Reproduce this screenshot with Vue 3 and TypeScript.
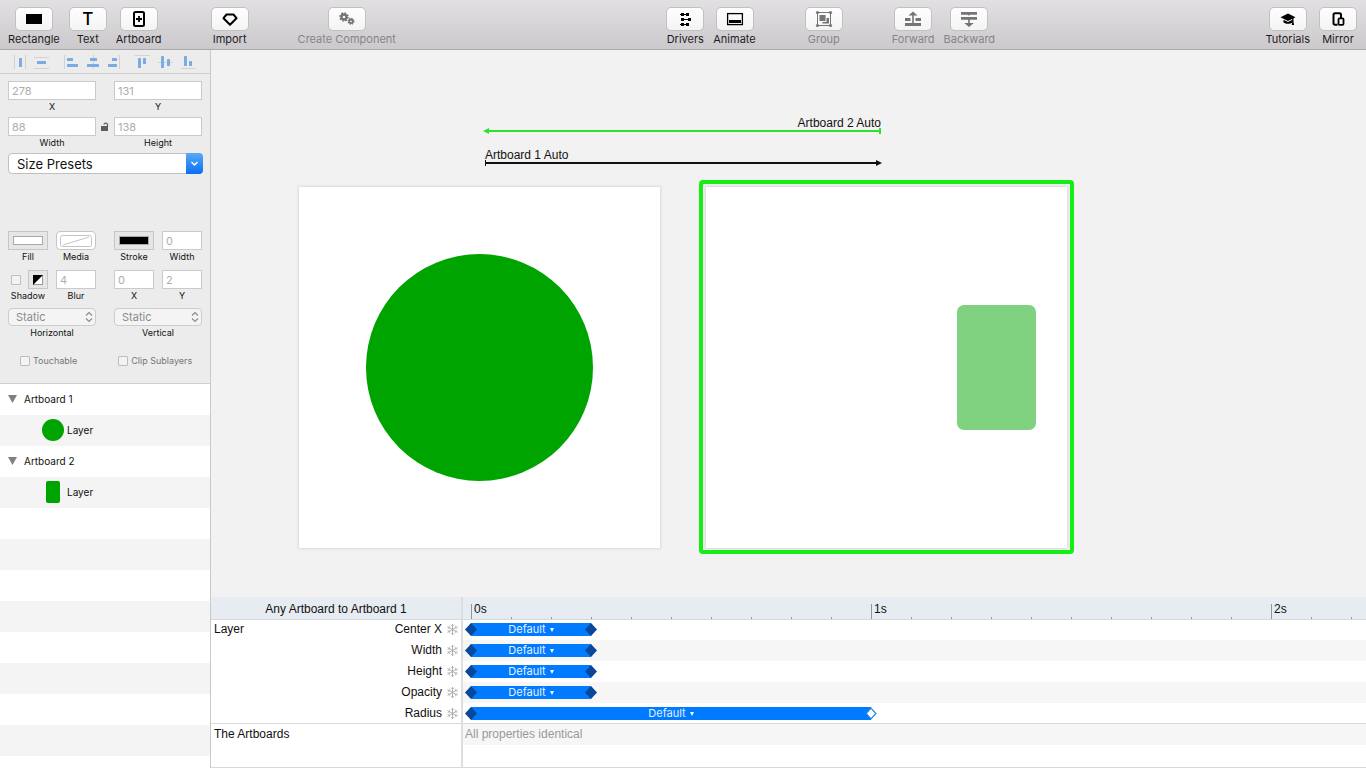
<script setup lang="ts">
import { ref } from 'vue'

interface Tool {
  id: string
  label: string
  disabled?: boolean
}

const toolGroups: { id: string; push?: boolean; tools: Tool[] }[] = [
  {
    id: 'insert',
    tools: [
      { id: 'rectangle', label: 'Rectangle' },
      { id: 'text', label: 'Text' },
      { id: 'artboard', label: 'Artboard' },
    ],
  },
  { id: 'import', tools: [{ id: 'import', label: 'Import' }] },
  { id: 'component', tools: [{ id: 'component', label: 'Create Component', disabled: true }] },
  {
    id: 'motion',
    push: true,
    tools: [
      { id: 'drivers', label: 'Drivers' },
      { id: 'animate', label: 'Animate' },
    ],
  },
  { id: 'group', tools: [{ id: 'group', label: 'Group', disabled: true }] },
  {
    id: 'order',
    tools: [
      { id: 'forward', label: 'Forward', disabled: true },
      { id: 'backward', label: 'Backward', disabled: true },
    ],
  },
  {
    id: 'help',
    push: true,
    tools: [
      { id: 'tutorials', label: 'Tutorials' },
      { id: 'mirror', label: 'Mirror' },
    ],
  },
]

/* Each glyph: a thin guide path and the blue bars as [x, y, width, height]. */
interface AlignGlyph {
  name: string
  guide: string
  bars: number[][]
}

const alignGroups: { id: string; items: AlignGlyph[] }[] = [
  {
    id: 'distribute',
    items: [
      { name: 'Distribute horizontally', guide: 'M2.5 2v14M13.5 2v14', bars: [[7, 5, 3, 9]] },
      { name: 'Distribute vertically', guide: 'M1 4.5h15M1 15.5h15', bars: [[4, 8, 9, 3]] },
    ],
  },
  {
    id: 'horizontal',
    items: [
      { name: 'Align left', guide: 'M.5 2v14', bars: [[3, 5, 6, 3], [3, 11, 11, 3]] },
      { name: 'Align center', guide: 'M8.5 2v14', bars: [[5, 5, 7, 3], [2, 11, 12, 3]] },
      { name: 'Align right', guide: 'M13.5 2v14', bars: [[6, 5, 5, 3], [2, 11, 9, 3]] },
    ],
  },
  {
    id: 'vertical',
    items: [
      { name: 'Align top', guide: 'M1 2.5h15', bars: [[4, 5, 3, 10], [9, 5, 3, 6]] },
      { name: 'Align middle', guide: 'M1 9.5h15', bars: [[4, 3, 3, 12], [10, 6, 3, 7]] },
      { name: 'Align bottom', guide: 'M1 15.5h15', bars: [[4, 3, 3, 10], [9, 8, 3, 5]] },
    ],
  },
]

const layers = [
  { name: 'Artboard 1', child: 'Layer', shape: 'round' },
  { name: 'Artboard 2', child: 'Layer', shape: 'tall' },
]

const pxPerSecond = 400
const ticks = Array.from({ length: 30 }, (_, i) => i)

const tracks = [
  { name: 'Center X', seconds: 0.3, open: false },
  { name: 'Width', seconds: 0.3, open: false },
  { name: 'Height', seconds: 0.3, open: false },
  { name: 'Opacity', seconds: 0.3, open: false },
  { name: 'Radius', seconds: 1, open: true },
]

const x = ref('278')
const y = ref('131')
const width = ref('88')
const height = ref('138')
const strokeWidth = ref('0')
const blur = ref('4')
const shadowX = ref('0')
const shadowY = ref('2')
const shadow = ref(false)
const touchable = ref(false)
const clip = ref(false)
</script>

<template>
  <div class="app">
    <header class="toolbar">
      <div v-for="g in toolGroups" :key="g.id" class="tool-group" :class="{ push: g.push }">
        <button v-for="t in g.tools" :key="t.id" type="button" class="tool" :disabled="t.disabled">
          <span class="tool-face">
            <span v-if="t.id === 'text'" class="tee" aria-hidden="true">T</span>
            <svg v-else width="24" height="20" viewBox="0 0 24 20" aria-hidden="true">
              <rect v-if="t.id === 'rectangle'" x="4" y="5" width="16" height="10" fill="currentColor" />
              <g v-else-if="t.id === 'artboard'" fill="none" stroke="currentColor" stroke-width="2">
                <rect x="7" y="3" width="10" height="14" rx="1.5" />
                <path d="M12 7v6M9 10h6" stroke-width="1.8" />
              </g>
              <path
                v-else-if="t.id === 'import'"
                d="M8.5 5.500h7l3 3.700L12 15.700 5.500 9.200z"
                fill="none"
                stroke="currentColor"
                stroke-width="2"
                stroke-linejoin="round"
              />
              <g v-else-if="t.id === 'component'" fill="none" stroke="currentColor">
                <circle cx="9" cy="8" r="2.5" stroke-width="2.4" />
                <circle cx="9" cy="8" r="4" stroke-width="1.6" stroke-dasharray="1.57 1.57" />
                <circle cx="16" cy="12.3" r="1.8" stroke-width="1.8" />
                <circle cx="16" cy="12.3" r="2.9" stroke-width="1.3" stroke-dasharray="1.14 1.14" />
              </g>
              <g v-else-if="t.id === 'drivers'" fill="currentColor">
                <rect x="8" y="4" width="3" height="3" />
                <rect x="13" y="4" width="3" height="3" />
                <rect x="8" y="9" width="3" height="3" />
                <rect x="15" y="9" width="3" height="3" />
                <rect x="8" y="14" width="3" height="3" />
                <rect x="13" y="14" width="3" height="3" />
                <path d="M7 5.100h7v1H7zM9 10.100h7v1H9zM7 15.100h7v1H7z" />
              </g>
              <g v-else-if="t.id === 'animate'">
                <rect x="4.600" y="4.600" width="14.800" height="11" fill="none" stroke="currentColor" stroke-width="1.300" />
                <rect x="6" y="11" width="12" height="3" fill="currentColor" />
              </g>
              <g v-else-if="t.id === 'group'" fill="currentColor">
                <rect x="5.5" y="3.5" width="13" height="13" fill="none" stroke="currentColor" />
                <circle cx="5.5" cy="3.5" r="1.6" />
                <circle cx="18.5" cy="3.5" r="1.6" />
                <circle cx="5.5" cy="16.5" r="1.6" />
                <circle cx="18.5" cy="16.5" r="1.6" />
                <rect x="7.5" y="6" width="6" height="6" />
                <path d="M14.5 9H17v5.5h-6.5V13h4z" />
              </g>
              <g v-else-if="t.id === 'forward'" fill="currentColor">
                <path d="M12 2.5l4.6 4h-3.8V14h7.2v3H4v-3h7.2V6.500H7.400z" />
                <path d="M4 9h5.500v3H4zM14.500 9H20v3h-5.500z" />
              </g>
              <g v-else-if="t.id === 'backward'" fill="currentColor">
                <path d="M4 3h16v2.700h-7l-1 1-1-1H4zM4 8h16v2.700h-7.200V14h4L12 18l-4.800-4h4v-3.300H4z" />
              </g>
              <g v-else-if="t.id === 'tutorials'" fill="currentColor">
                <path d="M12 4.500l7.500 3.700L12 12 4.500 8.200z" />
                <path d="M7.500 10.800L12 13l4.500-2.200v2.700c-2.500 1.800-6.500 1.800-9 0z" />
                <path d="M16.200 9h1.300v4l.6 3h-2.400l.5-3z" />
              </g>
              <g v-else fill="none" stroke="currentColor" stroke-width="2">
                <path d="M11.500 15.800H9A1.500 1.500 0 0 1 7.500 14.300V5.700A1.500 1.500 0 0 1 9 4.200h4.500A1.500 1.500 0 0 1 15 5.700V9" />
                <rect x="12.500" y="9.300" width="5" height="6.500" rx="1" stroke-width="1.800" />
              </g>
            </svg>
          </span>
          <span class="tool-label">{{ t.label }}</span>
        </button>
      </div>
    </header>

    <div class="body">
      <aside class="sidebar">
        <div class="align-bar">
          <div v-for="g in alignGroups" :key="g.id" class="align-group" :class="g.id">
            <button v-for="a in g.items" :key="a.name" type="button" :aria-label="a.name">
              <svg width="17" height="17" viewBox="0 0 17 17" aria-hidden="true">
                <path :d="a.guide" stroke="#d2d2d2" fill="none" />
                <rect
                  v-for="(b, i) in a.bars"
                  :key="i"
                  :x="b[0]"
                  :y="b[1]"
                  :width="b[2]"
                  :height="b[3]"
                  rx=".6"
                  fill="#7aabe3"
                />
              </svg>
            </button>
          </div>
        </div>

        <form class="inspector" @submit.prevent>
          <div class="pair">
            <label class="field"><input v-model="x" type="text" /><span>X</span></label>
            <label class="field"><input v-model="y" type="text" /><span>Y</span></label>
          </div>
          <div class="pair size">
            <label class="field"><input v-model="width" type="text" /><span>Width</span></label>
            <button type="button" class="lock" aria-label="Lock proportions">
              <svg width="8" height="9" viewBox="0 0 8 9" aria-hidden="true">
                <rect x="0" y="4" width="7" height="5" fill="#5c5c5c" />
                <path d="M2.800 2.500a1.900 1.900 0 0 1 3.700 0V5" fill="none" stroke="#5c5c5c" stroke-width="1.200" />
              </svg>
            </button>
            <label class="field"><input v-model="height" type="text" /><span>Height</span></label>
          </div>
          <div class="presets">
            <select aria-label="Size Presets">
              <option>Size Presets</option>
            </select>
            <svg class="presets-arrow" width="17" height="21" viewBox="0 0 17 21" aria-hidden="true">
              <path d="M5.500 9l3 3 3-3" fill="none" stroke="#fff" stroke-width="1.500" />
            </svg>
          </div>

          <div class="pair paint">
            <div class="half">
              <div class="field"><button id="fill" type="button" class="well"><i class="swatch white"></i></button><label for="fill">Fill</label></div>
              <div class="field">
                <button id="media" type="button" class="well media">
                  <svg width="32" height="12" viewBox="0 0 32 12" aria-hidden="true">
                    <rect x=".5" y=".5" width="31" height="11" rx="2" fill="#fff" stroke="#c4c4c4" />
                    <path d="M3 10L29 2" stroke="#c4c4c4" />
                  </svg>
                </button>
                <label for="media">Media</label>
              </div>
            </div>
            <div class="half">
              <div class="field"><button id="stroke" type="button" class="well"><i class="swatch black"></i></button><label for="stroke">Stroke</label></div>
              <label class="field"><input v-model="strokeWidth" type="text" /><span>Width</span></label>
            </div>
          </div>
          <div class="pair shadow">
            <div class="half">
              <div class="field">
                <div class="shadow-controls">
                  <input id="shadow" v-model="shadow" type="checkbox" />
                  <button type="button" class="well small" aria-label="Shadow color">
                    <svg width="10" height="10" viewBox="0 0 10 10" aria-hidden="true">
                      <rect x=".5" y=".5" width="9" height="9" fill="#fff" stroke="#9a9a9a" />
                      <path d="M0 0h10L0 10z" fill="#000" />
                    </svg>
                  </button>
                </div>
                <label for="shadow">Shadow</label>
              </div>
              <label class="field"><input v-model="blur" type="text" /><span>Blur</span></label>
            </div>
            <div class="half">
              <label class="field"><input v-model="shadowX" type="text" /><span>X</span></label>
              <label class="field"><input v-model="shadowY" type="text" /><span>Y</span></label>
            </div>
          </div>
          <div class="pair pins">
            <div v-for="axis in ['Horizontal', 'Vertical']" :key="axis" class="field">
              <div class="popup">
                <select :id="axis">
                  <option>Static</option>
                </select>
                <svg class="popup-arrow" width="8" height="12" viewBox="0 0 8 12" aria-hidden="true">
                  <path d="M1 4.500l3-3 3 3M1 7.500l3 3 3-3" fill="none" stroke="#8c8c8c" stroke-width="1.200" />
                </svg>
              </div>
              <label :for="axis">{{ axis }}</label>
            </div>
          </div>
          <div class="flags">
            <label><input v-model="touchable" type="checkbox" />Touchable</label>
            <label><input v-model="clip" type="checkbox" />Clip Sublayers</label>
          </div>
        </form>

        <ul class="layers">
          <li v-for="l in layers" :key="l.name">
            <div class="layer-row">
              <svg width="10" height="8" viewBox="0 0 10 8" aria-hidden="true"><path d="M0 0h9L4.500 8z" fill="#808080" /></svg>
              <span>{{ l.name }}</span>
            </div>
            <div class="layer-row child">
              <i class="thumb" :class="l.shape"></i>
              <span>{{ l.child }}</span>
            </div>
          </li>
        </ul>
      </aside>

      <main class="main">
        <section class="canvas">
          <div class="transition back">
            <span>Artboard 2 Auto</span>
            <svg width="398" height="7" viewBox="0 0 398 7" aria-hidden="true">
              <path d="M5 3h392M397 0v6" stroke="#2fe02f" stroke-width="2" fill="none" />
              <path d="M0 3L6 0v6z" fill="#2fe02f" />
            </svg>
          </div>
          <div class="transition forth">
            <span>Artboard 1 Auto</span>
            <svg width="397" height="7" viewBox="0 0 397 7" aria-hidden="true">
              <path d="M1 3h392" stroke="#111" stroke-width="2" fill="none" />
              <path d="M.5 0v6" stroke="#111" fill="none" />
              <path d="M397 3L391 0v6z" fill="#111" />
            </svg>
          </div>
          <div class="board first"><div class="circle"></div></div>
          <div class="board second"><div class="block"></div></div>
          <div class="selection"></div>
        </section>

        <section class="timeline">
          <div class="props">
            <h2>Any Artboard to Artboard 1</h2>
            <div class="prop-group">
              <span class="prop-owner">Layer</span>
              <ul>
                <li v-for="t in tracks" :key="t.name">
                  {{ t.name }}
                  <svg width="11" height="11" viewBox="0 0 11 11" fill="none" stroke="#b0b0b0" aria-hidden="true">
                    <path d="M5.500 0v11M.5 2.700l10 5.600M.5 8.300l10-5.600" />
                    <path d="M3.800 .8l1.700 1.500L7.200 .8M3.800 10.200l1.700-1.500 1.700 1.500M.5 4.400l2.200-.5-.4-2.200M10.500 6.600l-2.200.5.4 2.200M.5 6.600l2.200.5-.4 2.200M10.500 4.400l-2.200-.5.4-2.200" stroke-width=".7" />
                  </svg>
                </li>
              </ul>
            </div>
            <div class="artboards-row">The Artboards</div>
          </div>
          <div class="tracks">
            <div class="ruler">
              <div v-for="i in ticks" :key="i" class="tick" :class="{ major: i % 10 === 0 }">
                <span v-if="i % 10 === 0">{{ i / 10 }}s</span>
              </div>
            </div>
            <div v-for="t in tracks" :key="t.name" class="track">
              <button type="button" class="bar" :style="{ width: t.seconds * pxPerSecond + 'px' }">
                <svg class="key start" width="12" height="13" viewBox="0 0 12 13" aria-hidden="true"><path d="M6 0l6 6.500L6 13 0 6.500z" fill="#0a4799" /></svg>
                Default
                <svg class="caret" width="4" height="4" viewBox="0 0 4 4" aria-hidden="true"><path d="M0 0h4L2 4z" fill="#fff" /></svg>
                <svg class="key end" width="12" height="13" viewBox="0 0 12 13" aria-hidden="true">
                  <path v-if="t.open" d="M6 1.200l4.900 5.300L6 11.800 1.100 6.500z" fill="#fff" stroke="#1c86e6" stroke-width="1.200" />
                  <path v-else d="M6 0l6 6.500L6 13 0 6.500z" fill="#0a4799" />
                </svg>
              </button>
            </div>
            <div class="identical">All properties identical</div>
          </div>
        </section>
      </main>
    </div>
  </div>
</template>

<style>
body {
  background: #f2f2f2;
}
</style>

<style scoped>
* {
  box-sizing: border-box;
}
button,
input,
select {
  font: inherit;
  color: inherit;
  margin: 0;
  padding: 0;
  border: 0;
  background: none;
  border-radius: 0;
  appearance: none;
}
svg {
  display: block;
}
ul,
h2 {
  margin: 0;
  padding: 0;
  list-style: none;
  font: inherit;
}
.app {
  min-height: 100vh;
  display: flex;
  flex-direction: column;
  font-family: Inter, "Liberation Sans", sans-serif;
  font-size: 11px;
  color: #111;
}

/* toolbar */
.toolbar {
  height: 50px;
  display: flex;
  gap: 49px;
  padding: 7px 9px 0 8px;
  background: linear-gradient(#e3e0e3, #ccc9cd);
  border-bottom: 1px solid #aaa8ab;
}
.tool-group {
  display: flex;
  align-items: flex-start;
  gap: 9px;
}
.push {
  margin-left: auto;
}
.tool {
  display: flex;
  flex-direction: column;
  align-items: center;
  gap: 1px;
  color: #000;
}
.tool-face {
  width: 38px;
  height: 24px;
  display: flex;
  align-items: center;
  justify-content: center;
  border: 1px solid #c3c0c3;
  border-radius: 5px;
  background: linear-gradient(#fefefe, #f5f4f5);
}
.tee {
  font-size: 17px;
  font-weight: 500;
  line-height: 20px;
}
.tool-label {
  line-height: 14px;
  color: #1f1c1f;
}
.tool:disabled {
  color: #757375;
}
.tool:disabled .tool-label {
  color: #878487;
}

.body {
  flex: 1;
  display: grid;
  grid-template-columns: 211px minmax(0, 1fr);
}

/* sidebar */
.sidebar {
  display: flex;
  flex-direction: column;
  border-right: 1px solid #c9c9c9;
  background: #ececec;
}
.align-bar {
  height: 24px;
  display: flex;
  align-items: center;
  padding-left: 10px;
  border-bottom: 1px solid #cfcfcf;
}
.align-group {
  display: flex;
}
.align-group button {
  width: 21px;
  display: flex;
  justify-content: center;
}
.horizontal {
  margin-left: 10px;
}
.vertical {
  margin-left: 6px;
}
.vertical button {
  width: 23px;
}
.inspector {
  padding: 7px 8px 16px;
  font-size: 9px;
  line-height: 12px;
  border-bottom: 1px solid #cfcfcf;
}
.pair {
  display: grid;
  grid-template-columns: 88px 88px;
  gap: 18px;
}
.half {
  display: grid;
  grid-template-columns: 1fr 1fr;
  gap: 8px;
}
.field {
  display: flex;
  flex-direction: column;
  gap: 1px;
  text-align: center;
}
.field input[type="text"] {
  width: 100%;
  height: 19px;
  padding-left: 3px;
  border: 1px solid #cacaca;
  background: #fff;
  font-size: 11px;
  color: #adadad;
}
.size {
  margin-top: 4px;
  grid-template-columns: 88px 8px 88px;
  gap: 5px;
}
.lock {
  height: 19px;
  display: flex;
  align-items: center;
}
.presets {
  position: relative;
  width: 195px;
  margin-top: 4px;
}
.presets select {
  display: block;
  width: 100%;
  height: 21px;
  padding-left: 8px;
  border: 1px solid #c0c0c0;
  border-radius: 4px;
  background: #fff;
  font-size: 13px;
  color: #111;
}
.presets-arrow {
  position: absolute;
  top: 0;
  right: 0;
  border-radius: 0 4px 4px 0;
  background: linear-gradient(#5aa9f7, #0a6ff3);
  pointer-events: none;
}
.paint {
  margin-top: 57px;
}
.shadow {
  margin-top: 7px;
}
.well {
  width: 40px;
  height: 19px;
  display: flex;
  align-items: center;
  justify-content: center;
  border: 1px solid #c6c6c6;
  background: #e6e6e6;
}
.media {
  border-radius: 4px;
  background: #fff;
}
.well.small {
  width: 20px;
}
.swatch {
  width: 30px;
  height: 9px;
  border: 1px solid #a8a8a8;
}
.swatch.white {
  background: #fff;
}
.swatch.black {
  background: #000;
}
.shadow-controls {
  display: flex;
  align-items: center;
  justify-content: space-between;
  padding-left: 3px;
}
input[type="checkbox"] {
  width: 10px;
  height: 10px;
  border: 1px solid #bdbdbd;
  border-radius: 1px;
  background: #f3f3f3;
}
input[type="checkbox"]:checked {
  background: #7aabe3;
}
.pins {
  margin-top: 6px;
}
.popup {
  position: relative;
}
.popup select {
  display: block;
  width: 100%;
  height: 18px;
  padding-left: 7px;
  border: 1px solid #cdcdcd;
  border-radius: 4px;
  background: #f4f4f4;
  font-size: 11px;
  color: #8a8a8a;
}
.popup-arrow {
  position: absolute;
  top: 3px;
  right: 3px;
  pointer-events: none;
}
.flags {
  display: flex;
  gap: 41px;
  padding-left: 12px;
  margin-top: 16px;
  color: #777;
}
.flags label {
  display: flex;
  align-items: center;
  gap: 3px;
}

.layers {
  flex: 1;
  background: repeating-linear-gradient(#fff 0 31px, #f4f4f4 31px 62px);
  font-size: 10px;
}
.layer-row {
  height: 31px;
  display: flex;
  align-items: center;
  gap: 6px;
  padding: 0 0 1px 8px;
}
.layer-row.child {
  gap: 3px;
  padding-left: 42px;
}
.thumb {
  width: 22px;
  height: 22px;
  border-radius: 50%;
  background: #00a400;
}
.thumb.tall {
  width: 14px;
  margin: 0 4px;
  border-radius: 2px;
}

/* canvas */
.main {
  display: flex;
  flex-direction: column;
  font-family: "Liberation Sans", Arial, sans-serif;
  font-size: 12px;
}
.canvas {
  position: relative;
  flex: 1;
  min-height: 520px;
  overflow: hidden;
  background: #f2f2f2;
}
.transition {
  position: absolute;
  display: flex;
  flex-direction: column;
  line-height: 12px;
}
.back {
  left: 272px;
  top: 67px;
  align-items: flex-end;
}
.forth {
  left: 274px;
  top: 99px;
}
.transition svg {
  margin-top: -1px;
}
.board {
  position: absolute;
  top: 137px;
  width: 361px;
  height: 361px;
  background: #fff;
  box-shadow: 0 0 2px 1px #d9d9d9;
}
.first {
  left: 88px;
}
.second {
  left: 495px;
}
.circle {
  position: absolute;
  left: 67px;
  top: 67px;
  width: 227px;
  height: 227px;
  border-radius: 50%;
  background: #00a400;
}
.block {
  position: absolute;
  left: 251px;
  top: 118px;
  width: 79px;
  height: 125px;
  border-radius: 7px;
  background: #80d180;
}
.selection {
  position: absolute;
  left: 488px;
  top: 130px;
  width: 375px;
  height: 374px;
  border: 4px solid #14ee14;
  border-radius: 4px;
}

/* timeline */
.timeline {
  display: grid;
  grid-template-columns: 252px minmax(0, 1fr);
  background: #fff;
  border-bottom: 1px solid #d9d9d9;
}
.props {
  border-right: 2px solid #dedede;
}
.props h2,
.ruler {
  height: 22px;
  background: #e6ecf2;
  box-shadow: 0 1px #d5dade;
}
.props h2 {
  line-height: 24px;
  text-align: center;
}
.prop-group {
  display: flex;
  justify-content: space-between;
  padding: 0 3px;
  line-height: 21px;
  border-bottom: 1px solid #d9d9d9;
  height: 105px;
}
.prop-group li {
  height: 21px;
  display: flex;
  align-items: center;
  justify-content: flex-end;
  gap: 5px;
}
.artboards-row {
  height: 43px;
  padding-left: 3px;
  line-height: 21px;
}
.tracks {
  overflow: hidden;
}
.ruler {
  position: relative;
  display: flex;
  align-items: flex-end;
  padding-left: 8px;
}
.tick {
  flex: none;
  width: 40px;
  height: 2px;
  border-left: 1px solid #8f979e;
}
.tick.major {
  height: 15px;
  padding-left: 2px;
  line-height: 11px;
}
.track {
  height: 21px;
  padding: 4px 0 0 8px;
}
.track:nth-child(odd) {
  background: #f6f6f6;
}
.track:nth-child(6) {
  border-bottom: 1px solid #d9d9d9;
}
.bar {
  position: relative;
  height: 13px;
  display: flex;
  align-items: center;
  justify-content: center;
  gap: 4px;
  background: #007aff;
  color: #e4f1ff;
  font-family: Inter, "Liberation Sans", sans-serif;
  font-size: 11px;
  line-height: 13px;
}
.key {
  position: absolute;
  top: 0;
}
.start {
  left: -6px;
}
.end {
  right: -6px;
}
.identical {
  height: 21px;
  padding-left: 2px;
  line-height: 21px;
  color: #999;
  background: #f6f6f6;
}
</style>
